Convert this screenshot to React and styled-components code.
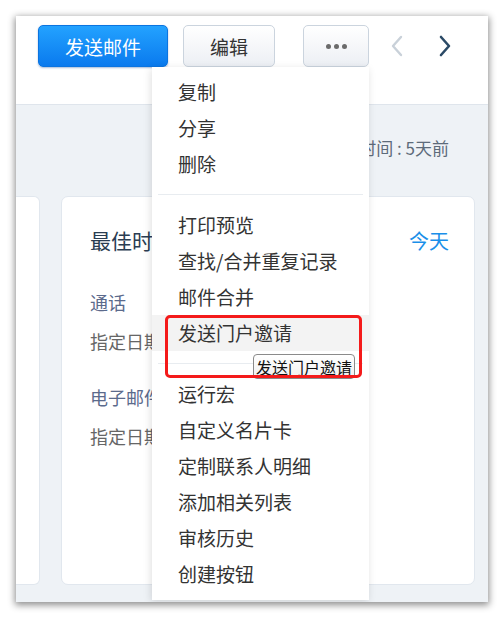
import React from "react";
import styled, { createGlobalStyle } from "styled-components";

const GlobalStyle = createGlobalStyle`
  html, body {
    margin: 0;
    padding: 0;
    background: #ffffff;
  }
  body {
    font-family: "Noto Sans CJK SC", "Noto Sans", sans-serif;
  }
`;

const menuGroups = [
  ["复制", "分享", "删除"],
  ["打印预览", "查找/合并重复记录", "邮件合并", "发送门户邀请"],
  ["运行宏", "自定义名片卡", "定制联系人明细", "添加相关列表", "审核历史", "创建按钮"],
];

const ChevronLeft = ({ color }) => (
  <svg width="14" height="22" viewBox="0 0 14 22">
    <path d="M11 2 L3 11 L11 20" fill="none" stroke={color} strokeWidth="2.4" strokeLinecap="round" strokeLinejoin="round" />
  </svg>
);

const ChevronRight = ({ color }) => (
  <svg width="14" height="22" viewBox="0 0 14 22">
    <path d="M3 2 L11 11 L3 20" fill="none" stroke={color} strokeWidth="2.6" strokeLinecap="round" strokeLinejoin="round" />
  </svg>
);

const App = () => {
  return (
    <Page>
      <GlobalStyle />
      <Frame>
        <Header>
          <PrimaryButton>发送邮件</PrimaryButton>
          <Button $w={92}>编辑</Button>
          <Button $w={66} $ml={28}>
            <Dots>
              <Dot />
              <Dot />
              <Dot />
            </Dots>
          </Button>
          <Arrows>
            <ChevronLeft color="#c9d1d9" />
            <ChevronRight color="#2b4a66" />
          </Arrows>
        </Header>

        <Body>
          <Updated>上次修改时间 : 5天前</Updated>
          <Cards>
            <SideCard />
            <Card>
              <CardHead>
                <CardTitle>最佳时间</CardTitle>
                <TodayLink>今天</TodayLink>
              </CardHead>
              <FieldLabel>通话</FieldLabel>
              <FieldValue>指定日期</FieldValue>
              <FieldLabel $top={32}>电子邮件</FieldLabel>
              <FieldValue>指定日期</FieldValue>
            </Card>
          </Cards>
        </Body>

        <Menu>
          {menuGroups.map((group, gi) => (
            <React.Fragment key={gi}>
              {gi > 0 && <Divider />}
              {group.map((item) => (
                <MenuItem key={item} $active={item === "发送门户邀请"}>
                  {item}
                </MenuItem>
              ))}
            </React.Fragment>
          ))}
        </Menu>

        <Tip>发送门户邀请</Tip>
        <Highlight />
      </Frame>
    </Page>
  );
};

export default App;

const Page = styled.div`
  width: 504px;
  height: 619px;
  padding: 16px;
  box-sizing: border-box;
`;

const Frame = styled.div`
  position: relative;
  width: 472px;
  height: 586px;
  display: flex;
  flex-direction: column;
  background: #eef2f6;
  box-shadow: 0 2px 7px 1px rgba(0, 0, 0, 0.45);
  overflow: hidden;
`;

const Header = styled.div`
  height: 89px;
  flex: 0 0 89px;
  box-sizing: border-box;
  background: #ffffff;
  border-bottom: 1px solid #dfe5ec;
  display: flex;
  align-items: flex-start;
  padding: 9px 0 0 22px;
  gap: 15px;
`;

const PrimaryButton = styled.button`
  width: 130px;
  height: 42px;
  border-radius: 5px;
  border: 1px solid #0b74e0;
  background: linear-gradient(#23a2ff, #0a7aee);
  color: #ffffff;
  font-family: "Noto Sans CJK SC", sans-serif;
  font-size: 19px;
  padding: 0;
  box-shadow: 0 1px 2px rgba(0, 60, 140, 0.35);
`;

const Button = styled.button`
  width: ${(p) => p.$w}px;
  height: 42px;
  margin-left: ${(p) => (p.$ml ? p.$ml - 15 : 0)}px;
  border-radius: 5px;
  border: 1px solid #cbd4de;
  background: linear-gradient(#ffffff, #eceff4);
  color: #333333;
  font-family: "Noto Sans CJK SC", sans-serif;
  font-size: 19px;
  padding: 0;
  display: flex;
  align-items: center;
  justify-content: center;
`;

const Dots = styled.span`
  display: flex;
  gap: 3px;
`;

const Dot = styled.span`
  width: 5px;
  height: 5px;
  border-radius: 50%;
  background: #6b6b6b;
`;

const Arrows = styled.div`
  display: flex;
  align-items: center;
  gap: 34px;
  height: 42px;
  margin-left: 6px;
`;

const Body = styled.div`
  flex: 1;
  display: flex;
  flex-direction: column;
  padding-bottom: 17px;
`;

const Updated = styled.div`
  height: 91px;
  box-sizing: border-box;
  padding: 30px 39px 0 0;
  text-align: right;
  font-size: 17px;
  color: #5d6b7a;
`;

const Cards = styled.div`
  flex: 1;
  display: flex;
  gap: 21px;
`;

const SideCard = styled.div`
  flex: 0 0 23px;
  background: #ffffff;
  border: 1px solid #e1e7ee;
  border-left: none;
  border-radius: 0 6px 6px 0;
`;

const Card = styled.div`
  width: 414px;
  box-sizing: border-box;
  background: #ffffff;
  border: 1px solid #e1e7ee;
  border-radius: 7px;
  padding: 27px 25px 0 28px;
`;

const CardHead = styled.div`
  display: flex;
  justify-content: space-between;
  align-items: center;
  height: 32px;
  margin-bottom: 34px;
`;

const CardTitle = styled.div`
  font-size: 21px;
  color: #2a3d52;
`;

const TodayLink = styled.div`
  font-size: 20px;
  color: #1a8fe9;
`;

const FieldLabel = styled.div`
  font-size: 18px;
  color: #5b6a8c;
  line-height: 24px;
  margin-top: ${(p) => p.$top || 0}px;
`;

const FieldValue = styled.div`
  font-size: 18px;
  color: #666666;
  line-height: 24px;
  margin-top: 15px;
`;

const Menu = styled.div`
  position: absolute;
  left: 136px;
  top: 51px;
  width: 217px;
  height: 533px;
  box-sizing: border-box;
  background: #ffffff;
  padding: 7px 0 8px;
  box-shadow: -1px 2px 8px rgba(0, 0, 0, 0.13);
`;

const MenuItem = styled.div`
  height: 36px;
  line-height: 36px;
  padding-left: 26px;
  font-size: 19px;
  color: #333333;
  white-space: nowrap;
  background: ${(p) => (p.$active ? "#f3f3f3" : "transparent")};
`;

const Divider = styled.div`
  height: 1px;
  background: #e8ecf0;
  margin: 12px 6px;
`;

const Tip = styled.div`
  position: absolute;
  left: 237px;
  top: 338px;
  width: 102px;
  height: 25px;
  box-sizing: border-box;
  border: 1px solid #8a8a8a;
  border-radius: 4px;
  background: linear-gradient(#ffffff, #f0f0f0);
  font-size: 16px;
  line-height: 24px;
  text-align: center;
  color: #111111;
  white-space: nowrap;
`;

const Highlight = styled.div`
  position: absolute;
  left: 149px;
  top: 299px;
  width: 197px;
  height: 63px;
  box-sizing: border-box;
  border: 3px solid #f41a1a;
  border-radius: 5px;
`;
